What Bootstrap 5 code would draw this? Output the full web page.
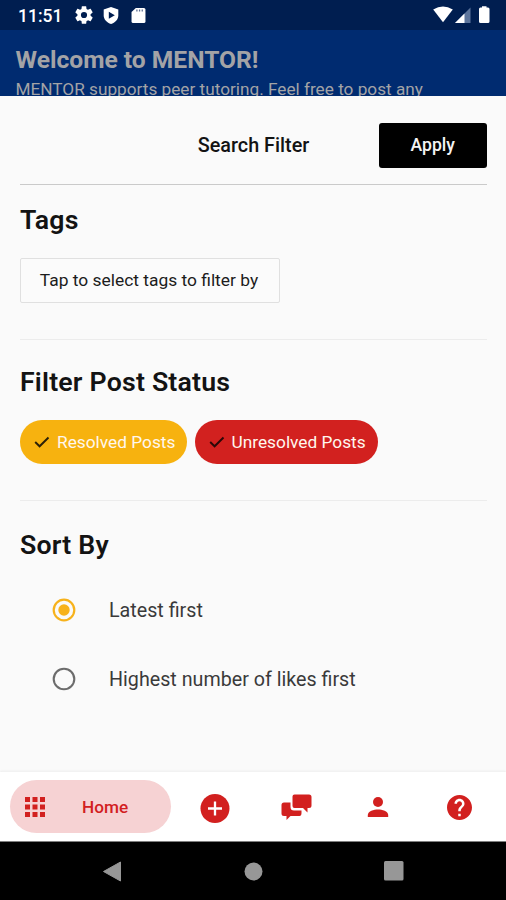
<!DOCTYPE html>
<html lang="en">
<head>
<meta charset="utf-8">
<meta name="viewport" content="width=device-width, initial-scale=1">
<title>Search Filter</title>
<link href="https://cdn.jsdelivr.net/npm/bootstrap@5.3.0/dist/css/bootstrap.min.css" rel="stylesheet">
<style>
  body { font-family: Roboto, "Liberation Sans", sans-serif; width: 506px; height: 900px; overflow: hidden; background: #fafafa; color: #131313; }
  svg { display: block; flex: none; }
  .status-bar { height: 30px; background: #001e50; padding: 0 13px 0 18px; }
  .clock { font-size: 17.5px; line-height: 30px; font-weight: 500; width: 42px; margin-right: 15px; padding-top: 2px; white-space: nowrap; }
  .sd-icon { margin-left: 10px; }
  .hero { height: 65.5px; background: #002b70; color: #a3a3a6; padding: 14px 15px 0 15.5px; }
  .hero-title { font-size: 24.6px; line-height: 32px; font-weight: 700; }
  .hero-text { font-size: 17.22px; line-height: 22px; margin-top: 2px; white-space: nowrap; }
  .sheet { height: 676.5px; padding: 0 19px 0 20px; }
  .sheet-head { height: 89px; border-bottom: 1px solid #cacaca; display: grid; grid-template-columns: 1fr auto 1fr; align-items: center; padding-top: 11px; }
  .sheet-name { font-size: 19.8px; line-height: 24px; font-weight: 500; padding-top: 1px; }
  .apply { width: 108.5px; height: 45px; font-size: 17.6px; font-weight: 500; border-radius: 3px; padding: 1px 0 0; background: #000; color: #f4f4f4; border: 0; }
  .section { border-bottom: 1px solid #ececec; }
  .section-title { font-size: 26.7px; line-height: 32px; font-weight: 600; margin: 0; letter-spacing: .2px; }
  .tags-section { height: 155px; padding-top: 19px; }
  .status-section { height: 161px; padding-top: 26px; }
  .sort-section { padding-top: 28px; }
  .tag-btn { width: 260px; height: 45px; margin-top: 22px; border: 1.5px solid #e0e0e0; border-radius: 2px; padding: 1px 2px 0 0; font-size: 17.4px; color: #1c1c1c; background: #fbfbfb; }
  .chip { height: 44px; font-size: 17.3px; color: #fff7ee; padding: 0 13px 0 14px; }
  .chip span { padding-top: 2px; }
  .chip svg { margin-right: 7px; }
  .chip-resolved { background: #f7b20f; width: 167px; }
  .chip-unresolved { background: #d2211f; width: 183.5px; }
  .chips { margin-top: 22.7px; gap: 7.5px; }
  .sort-option { height: 69px; padding-left: 32px; font-size: 19.7px; color: #3a3a3a; }
  .sort-option svg { margin: 0 33px 2px 0; }
  .tabs { height: 69px; background: #fff; box-shadow: 0 -1px 2px #ededed; color: #d2201f; position: relative; padding: 0 5px 0 10px; }
  .home-tab { width: 160.5px; height: 53px; background: #f6d2d3; border-radius: 27px; padding-left: 15px; font-size: 17.2px; font-weight: 500; margin-right: 3.5px; }
  .home-tab span { margin-left: 37px; padding-top: 2px; }
  .tab-icons { padding-top: 1px; }
  .tab-icons > div { width: 81.7px; }
  .sys-nav { height: 59px; background: #000; border-top: 1px solid #777; padding: 0 102px; }
</style>
</head>
<body>
  <header class="status-bar d-flex align-items-center text-white">
    <span class="clock">11:51</span>
    <svg width="18" height="18" viewBox="1.8 1.8 20.4 20.4" fill="#fff"><path d="M19.43 12.98c.04-.32.07-.64.07-.98s-.03-.66-.07-.98l2.11-1.65c.19-.15.24-.42.12-.64l-2-3.46c-.12-.22-.39-.3-.61-.22l-2.49 1c-.52-.4-1.08-.73-1.69-.98l-.38-2.65C14.46 2.18 14.25 2 14 2h-4c-.25 0-.46.18-.49.42l-.38 2.65c-.61.25-1.17.59-1.69.98l-2.49-1c-.23-.09-.49 0-.61.22l-2 3.46c-.13.22-.07.49.12.64l2.11 1.65c-.04.32-.07.65-.07.98s.03.66.07.98l-2.11 1.65c-.19.15-.24.42-.12.64l2 3.46c.12.22.39.3.61.22l2.49-1c.52.4 1.08.73 1.69.98l.38 2.65c.03.24.24.42.49.42h4c.25 0 .46-.18.49-.42l.38-2.65c.61-.25 1.17-.59 1.69-.98l2.49 1c.23.09.49 0 .61-.22l2-3.46c.12-.22.07-.49-.12-.64zM12 15.5a3.5 3.5 0 1 1 0-7 3.5 3.5 0 0 1 0 7z"/></svg>
    <svg class="ms-2" width="20" height="17" viewBox="0 0 19 17"><path fill="#fff" d="M9.500 0 16.800 2.500V8.500C16.800 12.500 13.500 15.800 9.500 17 5.500 15.800 2.200 12.500 2.200 8.500V2.500Z"/><path fill="#001e50" d="M7.300 4.800 13.300 8.300 7.300 11.800Z"/></svg>
    <svg class="sd-icon" width="15" height="17" viewBox="0 0 14 17" preserveAspectRatio="none"><path fill="#fff" d="M4.500 1H12a1.500 1.500 0 0 1 1.500 1.500v12A1.500 1.500 0 0 1 12 16H2A1.500 1.500 0 0 1 .5 14.500V5Z"/><path stroke="#5d6f92" stroke-width="1.200" d="M5.500 2.500v2M8 2.500v2M10.500 2.500v2"/></svg>
    <svg class="ms-auto" width="60" height="20" viewBox="433 5 60 20"><path fill="#fff" d="M433.200 9.500Q443 3.500 452.800 9.500L443 22.200Z"/><path fill="#5d759c" d="M470.500 7.500V23H455Z"/><path fill="#fff" d="M464.500 13.500V23H455Z"/><path fill="#fff" d="M482 7.500V6.300h4.500V7.500h1.500q1.500 0 1.500 1.500v12.500q0 1.500-1.500 1.500h-7.500q-1.500 0-1.500-1.500V9q0-1.500 1.500-1.500H482Z"/></svg>
  </header>

  <section class="hero overflow-hidden">
    <div class="hero-title">Welcome to MENTOR!</div>
    <div class="hero-text">MENTOR supports peer tutoring. Feel free to post any</div>
  </section>

  <main class="sheet">
    <div class="sheet-head">
      <span></span>
      <span class="sheet-name">Search Filter</span>
      <button class="btn apply ms-auto" type="button">Apply</button>
    </div>
    <section class="section tags-section">
      <h2 class="section-title">Tags</h2>
      <button class="btn tag-btn d-block" type="button">Tap to select tags to filter by</button>
    </section>
    <section class="section status-section">
      <h2 class="section-title">Filter Post Status</h2>
      <div class="chips d-flex">
        <div class="chip chip-resolved rounded-pill d-flex align-items-center text-nowrap"><svg width="16" height="12" viewBox="0 0 16 12"><path d="M1.200 6 5.600 10.300 14.500 1.500" fill="none" stroke="#2b2008" stroke-width="1.900"/></svg><span>Resolved Posts</span></div>
        <div class="chip chip-unresolved rounded-pill d-flex align-items-center text-nowrap"><svg width="16" height="12" viewBox="0 0 16 12"><path d="M1.200 6 5.600 10.300 14.500 1.500" fill="none" stroke="#2b0808" stroke-width="1.900"/></svg><span>Unresolved Posts</span></div>
      </div>
    </section>
    <section class="sort-section">
      <h2 class="section-title">Sort By</h2>
      <div class="pt-3">
        <div class="sort-option d-flex align-items-center"><svg width="24" height="24" viewBox="0 0 24 24"><circle cx="12" cy="12" r="10.300" fill="none" stroke="#f7b21b" stroke-width="2.200"/><circle cx="12" cy="12" r="5.700" fill="#f7b21b"/></svg><span>Latest first</span></div>
        <div class="sort-option d-flex align-items-center"><svg width="24" height="24" viewBox="0 0 24 24"><circle cx="12" cy="12" r="10.300" fill="none" stroke="#6c6c6c" stroke-width="2.100"/></svg><span>Highest number of likes first</span></div>
      </div>
    </section>
  </main>

  <nav class="tabs d-flex align-items-center">
    <div class="home-tab d-flex align-items-center">
      <svg width="20" height="20" viewBox="0 0 20 20" fill="#d2201f"><path d="M0 0h5v5H0zM7.500 0h5v5h-5zM15 0h5v5h-5zM0 7.500h5v5H0zM7.500 7.500h5v5h-5zM15 7.500h5v5h-5zM0 15h5v5H0zM7.500 15h5v5h-5zM15 15h5v5h-5z"/></svg>
      <span>Home</span>
    </div>
    <div class="tab-icons d-flex align-items-center">
      <div><svg class="mx-auto mt-1" width="30" height="30" viewBox="0 0 30 30"><circle cx="15" cy="14.500" r="14.500" fill="#d2201f"/><path d="M8 14.500h14M15 7.500v14" stroke="#fff" stroke-width="2.300"/></svg></div>
      <div><svg class="mx-auto" width="32" height="28" viewBox="0 0 32 28" fill="#d2201f"><path d="M13.500 1.500H28q2.500 0 2.500 2.500v8.500q0 2.500-2.500 2.500h-1.500v4.500L22 15H13.500Q11.500 15 11.500 13V3.500q0-2 2-2Z"/><path d="M3 9.500h6.500V14q0 3.500 3.500 3.500h7.500V20q0 3-2 3H9.500L5.500 27v-4H3q-2.500 0-2.500-2.500V12Q.5 9.500 3 9.500Z"/></svg></div>
      <div><svg class="mx-auto" width="22" height="22" viewBox="0 0 22 22" fill="#d2201f"><circle cx="11" cy="6" r="5"/><path d="M.8 21v-2C.8 15 7 13.400 11 13.400S21.200 15 21.200 19v2Z"/></svg></div>
      <div><svg class="mx-auto" width="25" height="25" viewBox="2 2 20 20" fill="#d2201f"><path d="M12 2C6.480 2 2 6.480 2 12s4.480 10 10 10 10-4.480 10-10S17.520 2 12 2zm1 17h-2v-2h2v2zm2.070-7.750-.9.920C13.450 12.900 13 13.500 13 15h-2v-.5c0-1.100.45-2.100 1.170-2.830l1.240-1.260c.37-.36.59-.86.59-1.410 0-1.100-.9-2-2-2s-2 .9-2 2H8c0-2.210 1.790-4 4-4s4 1.790 4 4c0 .88-.36 1.680-.93 2.250z"/></svg></div>
    </div>
  </nav>

  <footer class="sys-nav d-flex align-items-center justify-content-between">
    <svg width="20" height="21" viewBox="0 0 20 21"><path d="M1.500 10.500 18.500 1V20Z" fill="#979797" stroke="#979797" stroke-linejoin="round"/></svg>
    <svg width="19" height="19" viewBox="0 0 19 19"><circle cx="9.500" cy="9.500" r="9" fill="#979797"/></svg>
    <svg width="20" height="20" viewBox="0 0 20 20"><rect width="19.500" height="19.500" rx="1.500" fill="#979797"/></svg>
  </footer>
  <script src="https://cdn.jsdelivr.net/npm/bootstrap@5.3.0/dist/js/bootstrap.bundle.min.js"></script>
</body>
</html>
